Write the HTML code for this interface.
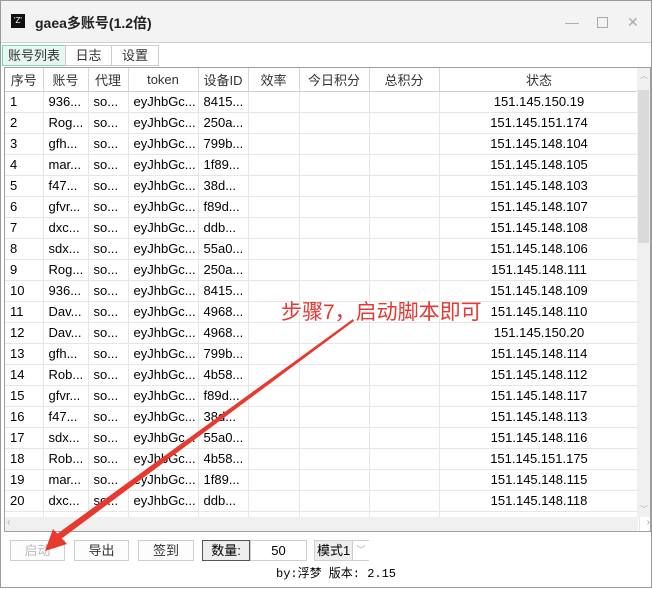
<!DOCTYPE html>
<html><head><meta charset="utf-8"><style>
*{margin:0;padding:0;box-sizing:border-box}
body{width:652px;height:588px;background:#fff;font-family:"Liberation Sans","Noto Sans CJK SC",sans-serif;font-size:12.5px;color:#000;position:relative;overflow:hidden}
.win{position:absolute;left:0;top:0;width:652px;height:588px;border:1px solid #9a9a9a;background:#fff}
.title{position:absolute;left:0;top:0;width:650px;height:42px;background:#f3f3f3;border-bottom:1px solid #d0d0d0}
.title .ic{position:absolute;left:10px;top:13px;width:14px;height:14px;background:#111;color:#fff;font-size:8px;line-height:14px;text-align:center}
.title .t{position:absolute;left:34px;top:12px;font-size:14px;font-weight:bold;color:#222}
.ctl{position:absolute;top:13px;color:#aaa;font-size:14px}
.tab{position:absolute;top:44px;height:21px;border:1px solid #ccc;background:#fff;font-size:13px;text-align:center;line-height:19px;color:#333}
.grid{position:absolute;left:3px;top:66px;width:647px;height:465px;border:1px solid #a0a0a0;overflow:hidden}
table{border-collapse:collapse;position:absolute;left:0;top:0;table-layout:fixed;width:634px}
td,th{height:21px;border-right:1px solid #e6e6e6;border-bottom:1px solid #e6e6e6;white-space:nowrap;overflow:hidden;font-weight:normal;font-size:13px;padding:0;text-indent:5px}
th{height:23px;border-right:1px solid #d6d6d6;border-bottom:1px solid #d0d0d0;color:#333;text-align:center;text-indent:0}
td.c{text-align:center;text-indent:0}
.vs{position:absolute;right:0;top:0;width:13px;height:449px;background:#f0f0f0}
.hs{position:absolute;left:0;bottom:0;width:633px;height:14px;background:#f0f0f0}
.btn{position:absolute;top:539px;height:21px;border:1px solid #cfcfcf;background:#fdfdfd;font-size:13px;text-align:center;line-height:19px;color:#333}
</style></head><body>
<div class="win">
<div class="title"><div class="ic">'Z'</div><div class="t">gaea多账号(1.2倍)</div>
<div class="ctl" style="left:564px">—</div><div class="ctl" style="left:596px;top:12px;width:11px;height:11px;border:1px solid #aaa;top:16px"></div><div class="ctl" style="left:626px">✕</div></div>
<div class="tab" style="left:1px;width:64px;background:#e6f7f2;border-color:#7fd4be">账号列表</div>
<div class="tab" style="left:64px;width:47px">日志</div>
<div class="tab" style="left:110px;width:48px">设置</div>
<div class="grid">
<table>
<colgroup><col style="width:38px"><col style="width:45px"><col style="width:40px"><col style="width:70px"><col style="width:50px"><col style="width:51px"><col style="width:70px"><col style="width:70px"><col style="width:200px"></colgroup>
<tr><th>序号</th><th>账号</th><th>代理</th><th>token</th><th>设备ID</th><th>效率</th><th>今日积分</th><th>总积分</th><th>状态</th></tr>
<tr><td>1</td><td>936...</td><td>so...</td><td>eyJhbGc...</td><td>8415...</td><td></td><td></td><td></td><td class="c">151.145.150.19</td></tr>
<tr><td>2</td><td>Rog...</td><td>so...</td><td>eyJhbGc...</td><td>250a...</td><td></td><td></td><td></td><td class="c">151.145.151.174</td></tr>
<tr><td>3</td><td>gfh...</td><td>so...</td><td>eyJhbGc...</td><td>799b...</td><td></td><td></td><td></td><td class="c">151.145.148.104</td></tr>
<tr><td>4</td><td>mar...</td><td>so...</td><td>eyJhbGc...</td><td>1f89...</td><td></td><td></td><td></td><td class="c">151.145.148.105</td></tr>
<tr><td>5</td><td>f47...</td><td>so...</td><td>eyJhbGc...</td><td>38d...</td><td></td><td></td><td></td><td class="c">151.145.148.103</td></tr>
<tr><td>6</td><td>gfvr...</td><td>so...</td><td>eyJhbGc...</td><td>f89d...</td><td></td><td></td><td></td><td class="c">151.145.148.107</td></tr>
<tr><td>7</td><td>dxc...</td><td>so...</td><td>eyJhbGc...</td><td>ddb...</td><td></td><td></td><td></td><td class="c">151.145.148.108</td></tr>
<tr><td>8</td><td>sdx...</td><td>so...</td><td>eyJhbGc...</td><td>55a0...</td><td></td><td></td><td></td><td class="c">151.145.148.106</td></tr>
<tr><td>9</td><td>Rog...</td><td>so...</td><td>eyJhbGc...</td><td>250a...</td><td></td><td></td><td></td><td class="c">151.145.148.111</td></tr>
<tr><td>10</td><td>936...</td><td>so...</td><td>eyJhbGc...</td><td>8415...</td><td></td><td></td><td></td><td class="c">151.145.148.109</td></tr>
<tr><td>11</td><td>Dav...</td><td>so...</td><td>eyJhbGc...</td><td>4968...</td><td></td><td></td><td></td><td class="c">151.145.148.110</td></tr>
<tr><td>12</td><td>Dav...</td><td>so...</td><td>eyJhbGc...</td><td>4968...</td><td></td><td></td><td></td><td class="c">151.145.150.20</td></tr>
<tr><td>13</td><td>gfh...</td><td>so...</td><td>eyJhbGc...</td><td>799b...</td><td></td><td></td><td></td><td class="c">151.145.148.114</td></tr>
<tr><td>14</td><td>Rob...</td><td>so...</td><td>eyJhbGc...</td><td>4b58...</td><td></td><td></td><td></td><td class="c">151.145.148.112</td></tr>
<tr><td>15</td><td>gfvr...</td><td>so...</td><td>eyJhbGc...</td><td>f89d...</td><td></td><td></td><td></td><td class="c">151.145.148.117</td></tr>
<tr><td>16</td><td>f47...</td><td>so...</td><td>eyJhbGc...</td><td>38d...</td><td></td><td></td><td></td><td class="c">151.145.148.113</td></tr>
<tr><td>17</td><td>sdx...</td><td>so...</td><td>eyJhbGc...</td><td>55a0...</td><td></td><td></td><td></td><td class="c">151.145.148.116</td></tr>
<tr><td>18</td><td>Rob...</td><td>so...</td><td>eyJhbGc...</td><td>4b58...</td><td></td><td></td><td></td><td class="c">151.145.151.175</td></tr>
<tr><td>19</td><td>mar...</td><td>so...</td><td>eyJhbGc...</td><td>1f89...</td><td></td><td></td><td></td><td class="c">151.145.148.115</td></tr>
<tr><td>20</td><td>dxc...</td><td>so...</td><td>eyJhbGc...</td><td>ddb...</td><td></td><td></td><td></td><td class="c">151.145.148.118</td></tr>
<tr><td></td><td></td><td></td><td></td><td></td><td></td><td></td><td></td><td></td></tr>
</table>
<div class="vs"><div style="position:absolute;left:1px;top:22px;width:11px;height:153px;background:#dadada"></div><div style="position:absolute;top:2px;left:3px;color:#aaa;font-size:8px">︿</div><div style="position:absolute;bottom:2px;left:3px;color:#aaa;font-size:8px">﹀</div></div>
<div class="hs"><div style="position:absolute;left:2px;top:0;color:#aaa;font-size:10px">‹</div><div style="position:absolute;right:-12px;top:0;color:#aaa;font-size:10px">›</div></div>
</div>
<div class="btn" style="left:9px;width:55px;color:#bbb">启动</div>
<div class="btn" style="left:73px;width:55px">导出</div>
<div class="btn" style="left:137px;width:56px">签到</div>
<div class="btn" style="left:201px;width:48px;border:1px solid #555;background:#eee;color:#000">数量:</div>
<div class="btn" style="left:249px;width:57px;background:#fff;color:#000">50</div>
<div class="btn" style="left:313px;width:55px;background:#eee;text-align:left;padding-left:2px;color:#000">模式1<span style="position:absolute;left:37px;top:0;width:17px;height:19px;border-left:1px solid #ccc;background:#fff;color:#aaa;font-size:9px;text-align:center">﹀</span></div>
<div style="position:absolute;left:275px;top:563px;font-family:'Liberation Mono','Noto Sans CJK SC',monospace;font-size:12px">by:浮梦 版本: 2.15</div>
<div style="position:absolute;left:280px;top:295px;color:#e53935;font-size:21px;white-space:nowrap">步骤7，启动脚本即可</div>
<svg style="position:absolute;left:0;top:0" width="652" height="588"><polygon points="352,318 353,320 60,538 56,533" fill="#e8392e"/><polygon points="44,550 52,528 66,543" fill="#e8392e"/></svg>
</div>
</body></html>
